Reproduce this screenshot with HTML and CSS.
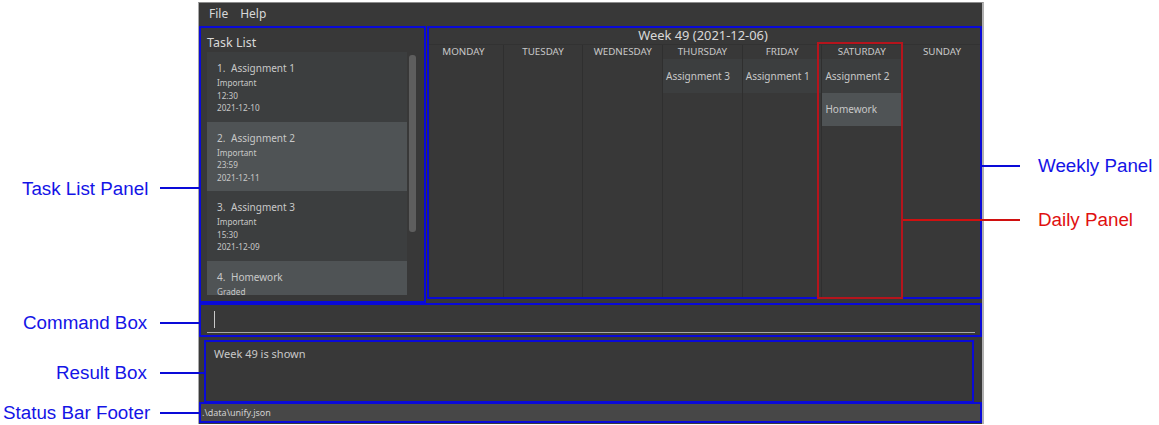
FILE: index.html
```html
<!DOCTYPE html>
<html>
<head>
	<meta charset="utf-8">
	<title>Unify</title>
	<link rel="stylesheet" href="styles.css">
</head>
<body>

    <div class="canvas">
        <div class="window">
            <div class="menu-bar">
                <span>File</span>
                <span>Help</span>
            </div>

            <div class="main">
                <div class="task-panel outlined">
                    <div class="task-title">Task List</div>
                    <div class="task-list">
                        <div class="task-card">
                            <div class="task-name"><span class="task-num">1.</span>Assignment 1</div>
                            <div class="task-line">Important</div>
                            <div class="task-line">12:30</div>
                            <div class="task-line">2021-12-10</div>
                        </div>
                        <div class="task-card alt">
                            <div class="task-name"><span class="task-num">2.</span>Assignment 2</div>
                            <div class="task-line">Important</div>
                            <div class="task-line">23:59</div>
                            <div class="task-line">2021-12-11</div>
                        </div>
                        <div class="task-card">
                            <div class="task-name"><span class="task-num">3.</span>Assingment 3</div>
                            <div class="task-line">Important</div>
                            <div class="task-line">15:30</div>
                            <div class="task-line">2021-12-09</div>
                        </div>
                        <div class="task-card alt">
                            <div class="task-name"><span class="task-num">4.</span>Homework</div>
                            <div class="task-line">Graded</div>
                        </div>
                        <div class="scroll-thumb"></div>
                    </div>
                </div>

                <div class="week-panel outlined">
                    <div class="week-title">Week 49 (2021-12-06)</div>
                    <div class="week-grid">
                        <div class="day">
                            <div class="day-name">MONDAY</div>
                        </div>
                        <div class="day">
                            <div class="day-name">TUESDAY</div>
                        </div>
                        <div class="day">
                            <div class="day-name">WEDNESDAY</div>
                        </div>
                        <div class="day">
                            <div class="day-name">THURSDAY</div>
                            <div class="day-card">Assignment 3</div>
                        </div>
                        <div class="day">
                            <div class="day-name">FRIDAY</div>
                            <div class="day-card">Assignment 1</div>
                        </div>
                        <div class="day saturday">
                            <div class="day-name">SATURDAY</div>
                            <div class="day-card">Assignment 2</div>
                            <div class="day-card alt">Homework</div>
                            <div class="daily-box"></div>
                        </div>
                        <div class="day">
                            <div class="day-name">SUNDAY</div>
                        </div>
                    </div>
                </div>
            </div>

            <div class="command-box outlined">
                <div class="command-input">
                    <div class="caret"></div>
                </div>
            </div>

            <div class="result-box">Week 49 is shown</div>

            <div class="status-bar outlined">.\data\unify.json</div>
        </div>

        <!-- callouts around the window -->
        <div class="callout label-task">Task List Panel</div>
        <div class="callout label-command">Command Box</div>
        <div class="callout label-result">Result Box</div>
        <div class="callout label-status">Status Bar Footer</div>
        <div class="callout label-weekly">Weekly Panel</div>
        <div class="callout red label-daily">Daily Panel</div>

        <div class="leader line-task"></div>
        <div class="leader line-command"></div>
        <div class="leader line-result"></div>
        <div class="leader line-status"></div>
        <div class="leader line-weekly"></div>
        <div class="leader red line-daily"></div>
    </div>

</body>
</html>
```

FILE: styles.css
```css
* {
    box-sizing: border-box;
}

body {
    margin: 0;
    background-color: #fff;
    font-family: "Noto Sans", "Open Sans", sans-serif;
}

.canvas {
    position: relative;
    width: 1159px;
    height: 425px;
    padding: 2px 0 0 198px;
    overflow: hidden;
}

.window {
    width: 786px;
    height: 422px;
    border-top: 1px solid #8c8c8c;
    border-left: 1px solid #a8a8a8;
    border-right: 2px solid #b0b0b0;
    background-color: #383838;
    color: #d0d0d0;
}

.outlined {
    border: 2px solid #0a0ad8;
}

.menu-bar {
    display: flex;
    gap: 12px;
    height: 23px;
    padding: 1px 0 0 10px;
    font-size: 12px;
    line-height: 20px;
    color: #d8d8d8;
}

.main {
    display: flex;
    align-items: flex-start;
    gap: 1px;
    height: 277px;
}

.task-panel {
    width: 227px;
    height: 277px;
    padding: 6px 0 0 6px;
}

.task-title {
    height: 18px;
    font-size: 12.5px;
    line-height: 17px;
    color: #d8d8d8;
}

.task-list {
    position: relative;
    width: 213px;
    height: 243px;
    overflow: hidden;
}

.task-card {
    width: 200px;
    height: 69.6px;
    padding: 8px 0 0 10px;
    background-color: #3c3e3f;
}

.task-card.alt {
    background-color: #4f5355;
}

.task-name {
    font-size: 10px;
    line-height: 17px;
    color: #c8c8c8;
}

.task-num {
    display: inline-block;
    width: 14px;
}

.task-line {
    font-size: 8.2px;
    line-height: 12.6px;
    color: #c8c8c8;
}

.scroll-thumb {
    position: absolute;
    top: 3px;
    left: 202px;
    width: 7px;
    height: 177px;
    border-radius: 3px;
    background-color: #5e5e5e;
}

.week-panel {
    width: 555px;
    height: 273px;
}

.week-title {
    height: 17px;
    padding-right: 3px;
    border-bottom: 1px solid #323232;
    text-align: center;
    font-size: 12.9px;
    line-height: 15px;
    color: #d8d8d8;
}

.week-grid {
    display: grid;
    grid-template-columns: repeat(7, 79.7px);
    margin-left: -5px;
    height: 252px;
}

.day {
    position: relative;
    border-right: 1px solid #2f2f2f;
}

.day:last-child {
    border-right: none;
}

.day-name {
    height: 14px;
    text-align: center;
    font-size: 9.8px;
    line-height: 14px;
    color: #c8c8c8;
}

.day-card {
    height: 33.5px;
    padding-left: 3px;
    background-color: #3c3e3f;
    font-size: 10px;
    line-height: 34px;
    color: #c8c8c8;
}

.day-card.alt {
    background-color: #4f5355;
    line-height: 32px;
}

.daily-box {
    position: absolute;
    top: -3px;
    left: -5px;
    width: 86px;
    height: 257px;
    border: 2px solid #b5141c;
}

.command-box {
    position: relative;
    width: 783px;
    height: 34px;
    padding: 0 5px 0 6px;
}

.command-input {
    height: 28px;
    padding: 6px 0 0 7px;
    border-bottom: 1px solid #a8a8a8;
}

.caret {
    width: 1px;
    height: 17px;
    background-color: #c8c8c8;
}

.result-box {
    width: 770px;
    height: 63px;
    margin: 3px 0 -1px 5px;
    padding: 4px 0 0 8px;
    border: 2px solid #0a0ad8;
    font-size: 11px;
    line-height: 16px;
    color: #c8c8c8;
}

.status-bar {
    width: 783px;
    height: 21px;
    position: relative;
    background-color: #474747;
    font-size: 9px;
    line-height: 17px;
    padding-left: 1px;
    color: #d0d0d0;
}

.callout {
    position: absolute;
    font-family: "Liberation Sans", Arial, sans-serif;
    font-size: 18.8px;
    line-height: 22px;
    color: #1414e6;
    white-space: nowrap;
}

.callout.red {
    color: #e01010;
}

.label-task {
    top: 178px;
    left: 22px;
}

.label-command {
    top: 312px;
    left: 23px;
}

.label-result {
    top: 362px;
    left: 56px;
}

.label-status {
    top: 402px;
    left: 3px;
}

.label-weekly {
    top: 155px;
    left: 1038px;
}

.label-daily {
    top: 209px;
    left: 1038px;
}

.leader {
    position: absolute;
    height: 2px;
    background-color: #0a0ad8;
}

.leader.red {
    background-color: #d01010;
}

.line-task {
    top: 187px;
    left: 160px;
    width: 40px;
}

.line-command {
    top: 322px;
    left: 160px;
    width: 40px;
}

.line-result {
    top: 372px;
    left: 160px;
    width: 45px;
}

.line-status {
    top: 412px;
    left: 160px;
    width: 40px;
}

.line-weekly {
    top: 165px;
    left: 982px;
    width: 38px;
}

.line-daily {
    top: 219px;
    left: 903px;
    width: 117px;
}
```
